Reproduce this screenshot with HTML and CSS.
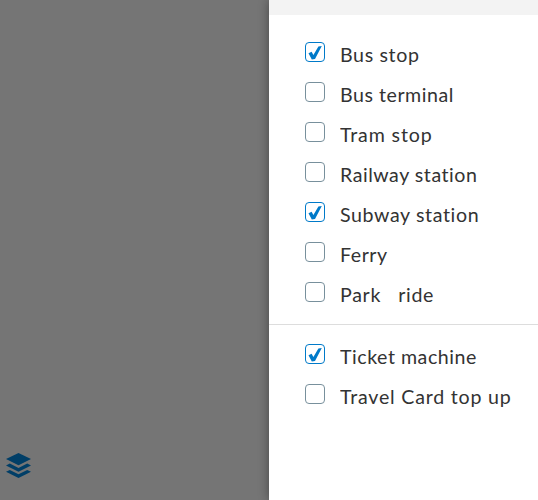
FILE: index.html
```
<!DOCTYPE html>
<html lang="en">
<head>
<meta charset="utf-8">
<title>Map layers</title>
<link rel="stylesheet" href="styles.css">
</head>
<body>
<div class="app">
  <div class="map">
    <svg class="layers" width="26" height="26" viewBox="0 0 26 26">
      <path d="M12.5 0 25 6 12.5 12.3 0 6Z"/>
      <path d="M0 12.4 3.8 10.6 12.5 15 21.2 10.6 25 12.4 12.5 18.7Z"/>
      <path d="M0 18.7 3.8 16.9 12.5 21.3 21.2 16.9 25 18.7 12.5 25Z"/>
    </svg>
  </div>
  <aside class="panel">
    <div class="header"></div>
    <ul class="group">
      <li class="row"><span class="box checked"><svg viewBox="0 0 18 18"><path d="M2.5 10.3 5.6 8.7 7.4 12 12.4 3.6 15.8 3 9 16 5.8 16.6Z"/></svg></span><span class="label bus">Bus stop</span></li>
      <li class="row"><span class="box"></span><span class="label terminal">Bus terminal</span></li>
      <li class="row"><span class="box"></span><span class="label tram">Tram stop</span></li>
      <li class="row"><span class="box"></span><span class="label rail">Railway station</span></li>
      <li class="row"><span class="box checked"><svg viewBox="0 0 18 18"><path d="M2.5 10.3 5.6 8.7 7.4 12 12.4 3.6 15.8 3 9 16 5.8 16.6Z"/></svg></span><span class="label subway">Subway station</span></li>
      <li class="row"><span class="box"></span><span class="label ferry">Ferry</span></li>
      <li class="row"><span class="box"></span><span class="label park">Park &nbsp; ride</span></li>
    </ul>
    <ul class="group extra">
      <li class="row"><span class="box checked"><svg viewBox="0 0 18 18"><path d="M2.5 10.3 5.6 8.7 7.4 12 12.4 3.6 15.8 3 9 16 5.8 16.6Z"/></svg></span><span class="label ticket">Ticket machine</span></li>
      <li class="row"><span class="box"></span><span class="label card">Travel Card top up</span></li>
    </ul>
  </aside>
</div>
</body>
</html>
```
FILE: styles.css
```
* { box-sizing: border-box; }
body { margin: 0; font-family: Lato, sans-serif; color: #333; }
.app { display: flex; height: 500px; overflow: hidden; background: #757575; }
.map { width: 269px; display: flex; align-items: flex-end; padding: 0 0 21px 6px; }
.layers { display: block; fill: #003e67; }
.panel { flex: 1; background: #fff; box-shadow: 0 0 10px rgba(0,0,0,.4); }
.header { height: 15px; background: #f3f3f3; }
.group { list-style: none; margin: 0; padding: 27px 0 2px 36px; }
.extra { border-top: 1px solid #ddd; padding-top: 19px; }
.row { display: flex; height: 40px; gap: 15px; }
.box { width: 20px; height: 20px; border: 1px solid #78909c; border-radius: 4px; }
.box svg { display: block; width: 18px; height: 18px; fill: #007ac9; }
.checked { border-color: #007ac9; }
.label { font-size: 18.5px; line-height: 26px; white-space: nowrap; transform: scaleX(1.06); transform-origin: left; }
.bus { letter-spacing: .6px; }
.terminal { letter-spacing: .5px; }
.tram { letter-spacing: .8px; }
.rail { letter-spacing: .49px; }
.subway { letter-spacing: .58px; }
.ferry { letter-spacing: .5px; }
.park { letter-spacing: .65px; }
.ticket { letter-spacing: .49px; }
.card { letter-spacing: .74px; }
```
